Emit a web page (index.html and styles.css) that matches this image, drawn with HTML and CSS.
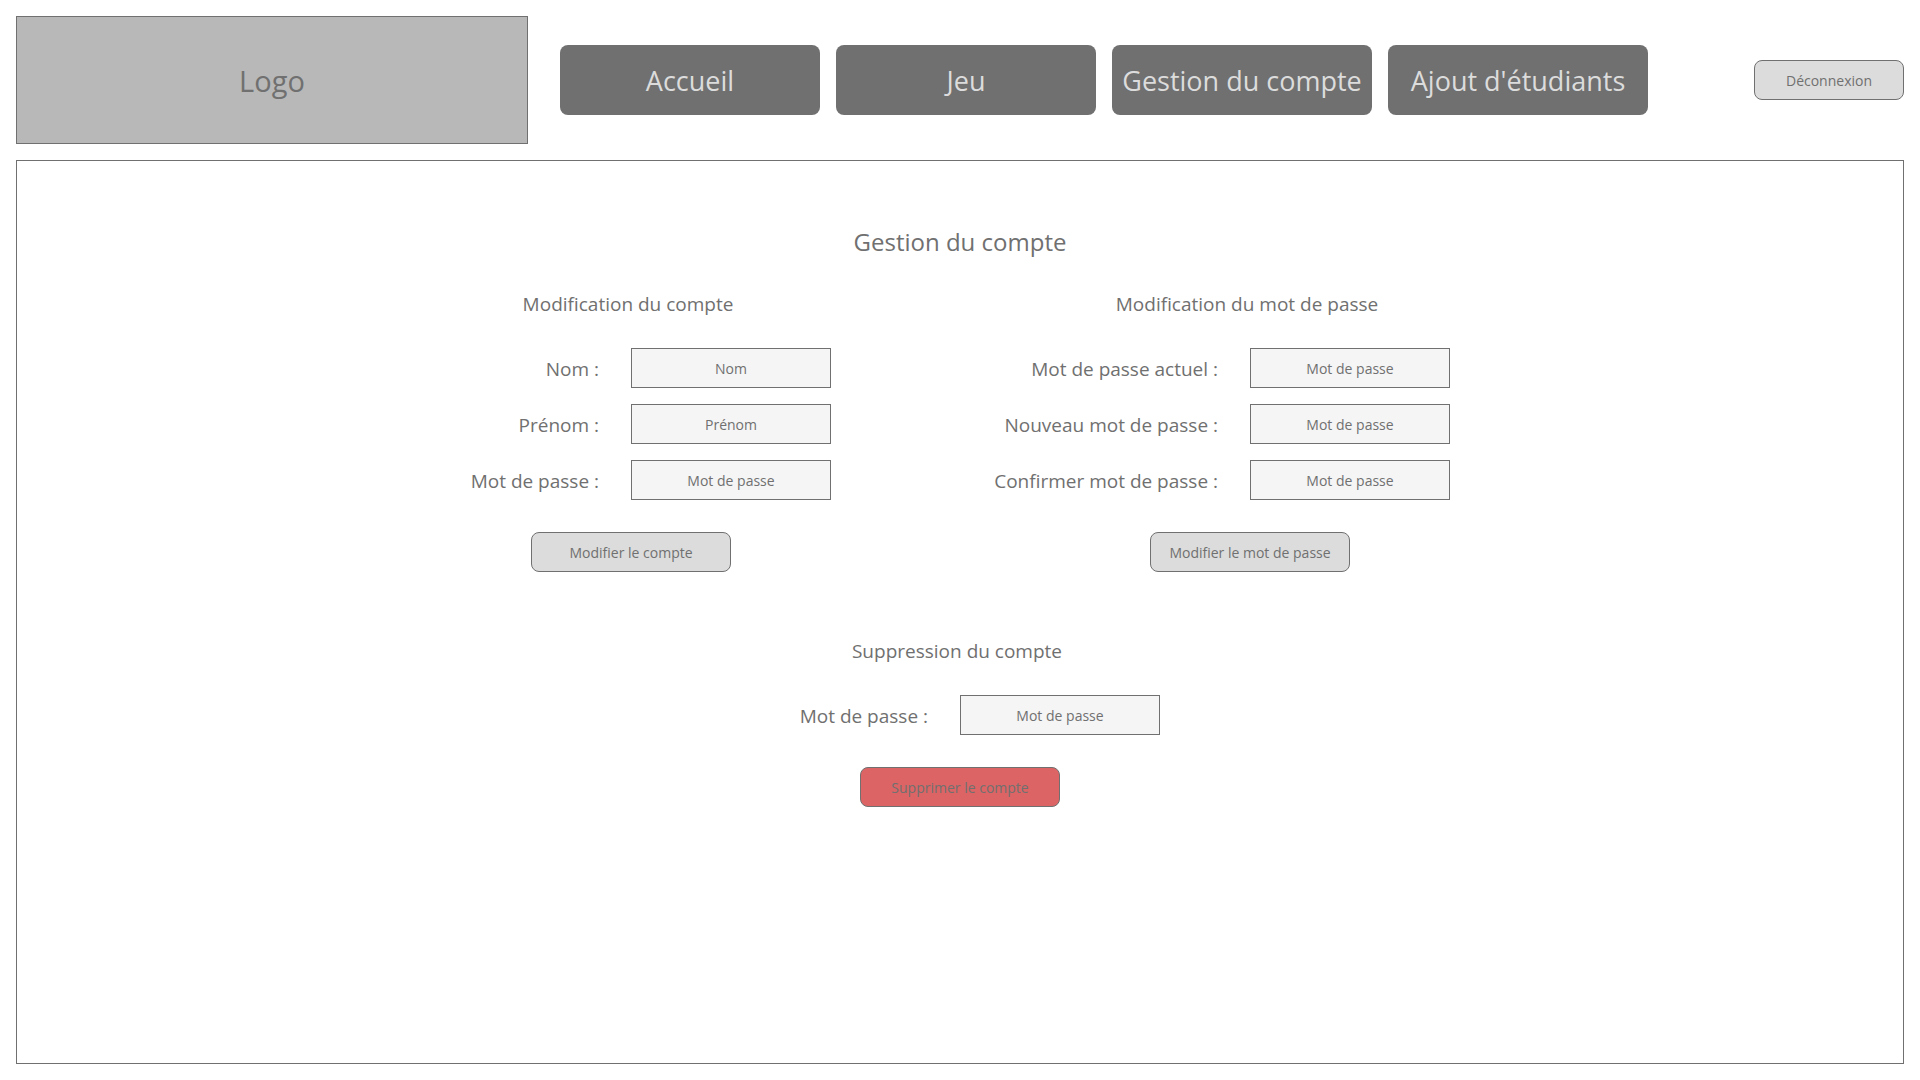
FILE: index.html
```html
<!DOCTYPE html>
<html lang="fr">
<head>
  <meta charset="utf-8">
  <meta name="viewport" content="width=device-width, initial-scale=1">
  <title>Gestion du compte</title>
  <link rel="stylesheet" href="styles.css">
</head>
<body>
  <header class="header">
    <div class="logo">Logo</div>
    <nav class="nav">
      <a class="nav-link" href="#accueil">Accueil</a>
      <a class="nav-link" href="#jeu">Jeu</a>
      <a class="nav-link" href="#compte">Gestion du compte</a>
      <a class="nav-link" href="#etudiants">Ajout d'étudiants</a>
    </nav>
    <button class="button button-logout" type="button">Déconnexion</button>
  </header>

  <main class="content">
    <h1 class="title">Gestion du compte</h1>

    <div class="form-row">
      <form class="form">
        <h2 class="form-title">Modification du compte</h2>
        <div class="fields">
          <label class="label" for="nom">Nom :</label>
          <input class="input" id="nom" type="text" placeholder="Nom">
          <label class="label" for="prenom">Prénom :</label>
          <input class="input" id="prenom" type="text" placeholder="Prénom">
          <label class="label" for="mdp">Mot de passe :</label>
          <input class="input" id="mdp" type="password" placeholder="Mot de passe">
        </div>
        <button class="button" type="submit">Modifier le compte</button>
      </form>

      <form class="form">
        <h2 class="form-title">Modification du mot de passe</h2>
        <div class="fields">
          <label class="label" for="mdp-actuel">Mot de passe actuel :</label>
          <input class="input" id="mdp-actuel" type="password" placeholder="Mot de passe">
          <label class="label" for="mdp-nouveau">Nouveau mot de passe :</label>
          <input class="input" id="mdp-nouveau" type="password" placeholder="Mot de passe">
          <label class="label" for="mdp-confirmer">Confirmer mot de passe :</label>
          <input class="input" id="mdp-confirmer" type="password" placeholder="Mot de passe">
        </div>
        <button class="button" type="submit">Modifier le mot de passe</button>
      </form>
    </div>

    <form class="form">
      <h2 class="form-title">Suppression du compte</h2>
      <div class="fields">
        <label class="label" for="mdp-suppression">Mot de passe :</label>
        <input class="input" id="mdp-suppression" type="password" placeholder="Mot de passe">
      </div>
      <button class="button button-danger" type="submit">Supprimer le compte</button>
    </form>
  </main>
</body>
</html>
```
FILE: styles.css
```css
* {
  box-sizing: border-box;
}

body {
  display: flex;
  flex-direction: column;
  gap: 16px;
  min-height: 100vh;
  margin: 0;
  padding: 16px;
  background: #ffffff;
  color: #707070;
  font-family: "Open Sans", "Noto Sans", sans-serif;
  font-size: 19px;
}

.header {
  display: flex;
  align-items: center;
  gap: 32px;
}

.logo {
  display: flex;
  flex: 0 1 512px;
  align-items: center;
  justify-content: center;
  height: 128px;
  border: 1px solid #707070;
  background: #b8b8b8;
  font-size: 29px;
}

.nav {
  display: flex;
  flex: 0 1 1088px;
  gap: 16px;
}

.nav-link {
  display: flex;
  flex: 1;
  align-items: center;
  justify-content: center;
  height: 70px;
  border-radius: 8px;
  background: #707070;
  color: #dcdcdc;
  font-size: 27px;
  text-decoration: none;
  white-space: nowrap;
}

.button {
  width: 200px;
  height: 40px;
  padding: 0;
  border: 1px solid #707070;
  border-radius: 8px;
  background: #dcdcdc;
  color: #707070;
  font-family: inherit;
  font-size: 14px;
}

.button-logout {
  width: 150px;
  margin-left: auto;
}

.button-danger {
  background: #dc6464;
}

.content {
  display: flex;
  flex: 1;
  flex-direction: column;
  align-items: center;
  padding-top: 64px;
  border: 1px solid #707070;
}

.title {
  margin: 0 0 30px;
  font-size: 24px;
  font-weight: 400;
  line-height: 34px;
}

.form-row {
  display: flex;
  gap: 99px;
  margin-bottom: 64px;
  padding-right: 39px;
}

.form {
  display: flex;
  flex-direction: column;
  align-items: center;
  width: 520px;
}

.form-title {
  margin: 0 0 29px;
  padding-right: 6px;
  font-size: 19px;
  font-weight: 400;
  line-height: 30px;
}

.fields {
  display: grid;
  grid-template-columns: 1fr 1fr;
  row-gap: 16px;
  width: 100%;
  margin-bottom: 32px;
}

.label {
  padding: 2px 32px 0 0;
  line-height: 38px;
  text-align: right;
  white-space: nowrap;
}

.input {
  width: 200px;
  height: 40px;
  padding: 0;
  border: 1px solid #707070;
  border-radius: 0;
  background: #f5f5f5;
  color: #707070;
  font-family: inherit;
  font-size: 14px;
  text-align: center;
}

.input::placeholder {
  color: #707070;
  opacity: 1;
}
```
